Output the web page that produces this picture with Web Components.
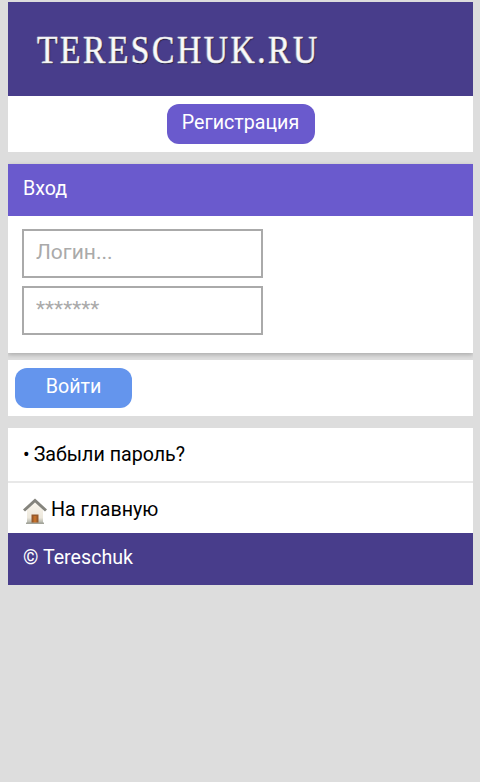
<!DOCTYPE html>
<html lang="ru">
<head>
<meta charset="utf-8">
<title>Tereschuk.ru</title>
<style>
    html, body { background: #dddddd; }
    body {
        margin: 2px 7px 0 8px;
        font-family: Roboto, "Liberation Sans", sans-serif;
        font-size: 19.65px;
        color: #000;
    }
</style>
</head>
<body>
<site-logo>TERESCHUK.RU</site-logo>
<action-bar center gap="12"><pill-button color="#6a5acd" wide="148">Регистрация</pill-button></action-bar>
<login-card title="Вход"></login-card>
<action-bar gap="12"><pill-button color="#6495ed" wide="117">Войти</pill-button></action-bar>
<nav-row bullet>Забыли пароль?</nav-row>
<nav-row home>На главную</nav-row>
<site-footer>© Tereschuk</site-footer>

<script>
class SiteLogo extends HTMLElement {
    constructor() {
        super();
        this.attachShadow({ mode: 'open' });
        this.shadowRoot.innerHTML = `
            <style>
                :host {
                    display: flex;
                    align-items: center;
                    height: 94px;
                    padding-left: 29px;
                    background: #483d8b;
                }
                .logo {
                    font-family: "Liberation Serif", serif;
                    font-size: 41px;
                    letter-spacing: 3px;
                    color: #fafafa;
                    -webkit-text-stroke: 0.5px #e4e4e8;
                    text-shadow: 1px 1px 1px #1f1b38, -1px 0 1px #77778f;
                    white-space: nowrap;
                    transform: scaleX(0.82);
                    transform-origin: left center;
                }
            </style>
            <div class="logo"><slot></slot></div>
        `;
    }
}

class PillButton extends HTMLElement {
    constructor() {
        super();
        this.attachShadow({ mode: 'open' });
    }

    connectedCallback() {
        this.shadowRoot.innerHTML = `
            <style>
                :host {
                    display: flex;
                    align-items: center;
                    justify-content: center;
                    box-sizing: border-box;
                    height: 40px;
                    padding-bottom: 3px;
                    width: ${this.getAttribute('wide')}px;
                    border-radius: 12px;
                    background: ${this.getAttribute('color')};
                    color: #fff;
                }
            </style>
            <slot></slot>
        `;
    }
}

class ActionBar extends HTMLElement {
    constructor() {
        super();
        this.attachShadow({ mode: 'open' });
        this.shadowRoot.innerHTML = `
            <style>
                :host {
                    display: flex;
                    height: 56px;
                    box-sizing: border-box;
                    padding: 8px 7px;
                    background: #fff;
                }
                :host([center]) { justify-content: center; }
                :host([gap]) { margin-bottom: 12px; }
            </style>
            <slot></slot>
        `;
    }
}

class LoginCard extends HTMLElement {
    constructor() {
        super();
        this.attachShadow({ mode: 'open' });
    }

    connectedCallback() {
        this.shadowRoot.innerHTML = `
            <style>
                :host {
                    display: block;
                    margin-bottom: 7px;
                    background: #fff;
                    box-shadow: 0 2px 4px rgba(0,0,0,0.16), 0 1px 6px rgba(0,0,0,0.08);
                }
                .head {
                    display: flex;
                    align-items: center;
                    box-sizing: border-box;
                    height: 52px;
                    padding: 0 0 3px 15px;
                    background: #6a5acd;
                    color: #fff;
                }
                .body {
                    display: flex;
                    flex-direction: column;
                    gap: 8px;
                    padding: 13px 14px 18px;
                }
                input {
                    display: block;
                    box-sizing: border-box;
                    width: 241px;
                    height: 49px;
                    margin: 0;
                    padding: 0 12px 4px;
                    border: 2px solid #aaa;
                    border-radius: 0;
                    outline: 0;
                    background: #fff;
                    font: inherit;
                    font-size: 21px;
                }
                input::placeholder { color: #aaa; opacity: 1; }
            </style>
            <div class="head">${this.getAttribute('title')}</div>
            <div class="body">
                <input type="text" placeholder="Логин...">
                <input type="password" placeholder="*******">
            </div>
        `;
    }
}

class NavRow extends HTMLElement {
    constructor() {
        super();
        this.attachShadow({ mode: 'open' });
    }

    connectedCallback() {
        const home = this.hasAttribute('home');
        const icon = home ? `
            <svg width="24" height="26" viewBox="0 0 24 26">
                <defs>
                    <linearGradient id="wall" x1="0" y1="0" x2="0" y2="1">
                        <stop offset="0" stop-color="#fbf7ee"/>
                        <stop offset="0.75" stop-color="#ece7db"/>
                        <stop offset="1" stop-color="#aeb0a6"/>
                    </linearGradient>
                </defs>
                <path d="M4 25V12l8-8 8 8v13z" fill="url(#wall)"/>
                <path d="M8.500 16.500h7V25h-7z" fill="#96592a"/>
                <path d="M10.500 18h3v7h-3z" fill="#c4702a"/>
                <path d="M1 12.500 12 2.500l11 10" fill="none" stroke="#85847d" stroke-width="3"/>
                <path d="M3 24.500h18V26H3z" fill="#a3a49a"/>
            </svg>` : '•';
        this.shadowRoot.innerHTML = `
            <style>
                :host {
                    display: flex;
                    align-items: center;
                    box-sizing: border-box;
                    height: ${home ? 50 : 55}px;
                    padding-left: 15px;
                    gap: 4px;
                    background: #fff;
                    ${home ? 'padding-top: 2px;' : 'border-bottom: 2px solid #e8e8e8; padding-bottom: 1px;'}
                }
                svg { flex: none; margin-top: 4px; }
            </style>
            ${icon}<span><slot></slot></span>
        `;
    }
}

class SiteFooter extends HTMLElement {
    constructor() {
        super();
        this.attachShadow({ mode: 'open' });
        this.shadowRoot.innerHTML = `
            <style>
                :host {
                    display: flex;
                    align-items: center;
                    box-sizing: border-box;
                    height: 52px;
                    padding: 0 0 3px 15px;
                    background: #483d8b;
                    color: #fff;
                }
            </style>
            <slot></slot>
        `;
    }
}

customElements.define('site-logo', SiteLogo);
customElements.define('pill-button', PillButton);
customElements.define('action-bar', ActionBar);
customElements.define('login-card', LoginCard);
customElements.define('nav-row', NavRow);
customElements.define('site-footer', SiteFooter);
</script>
</body>
</html>
